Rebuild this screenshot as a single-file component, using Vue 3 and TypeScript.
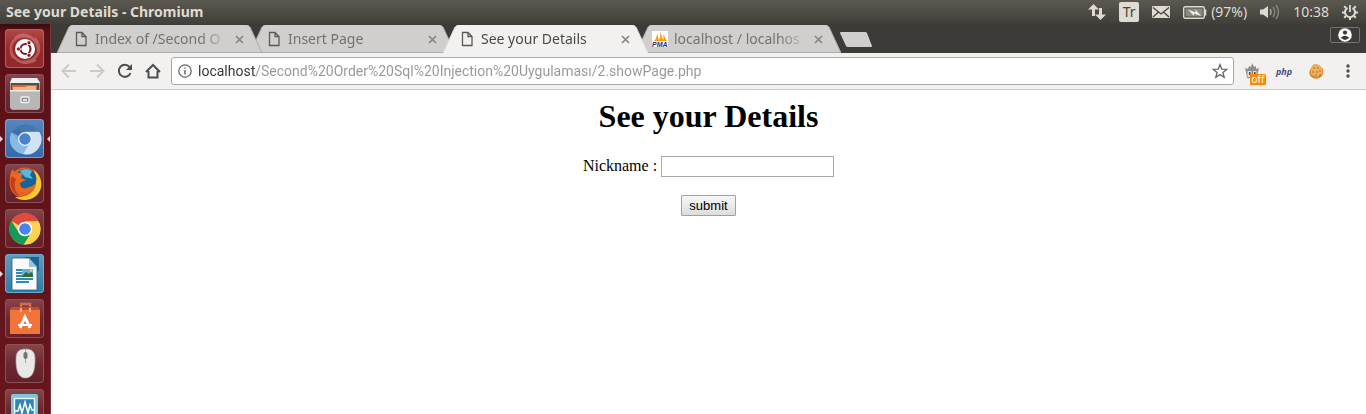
<script setup lang="ts">
import { ref } from 'vue'

interface Tab {
  title: string
  icon: 'page' | 'pma'
  active: boolean
}

interface LauncherItem {
  id: string
  label: string
  running?: boolean
  focused?: boolean
}

const tabs: Tab[] = [
  { title: 'Index of /Second O', icon: 'page', active: false },
  { title: 'Insert Page', icon: 'page', active: false },
  { title: 'See your Details', icon: 'page', active: true },
  { title: 'localhost / localhos', icon: 'pma', active: false },
]

const launcher: LauncherItem[] = [
  { id: 'dash', label: 'Search your computer' },
  { id: 'files', label: 'Files' },
  { id: 'chromium', label: 'Chromium', running: true, focused: true },
  { id: 'firefox', label: 'Firefox' },
  { id: 'chrome', label: 'Chrome' },
  { id: 'writer', label: 'Writer', running: true },
  { id: 'software', label: 'Software' },
  { id: 'mouse', label: 'Mouse' },
  { id: 'monitor', label: 'System Monitor' },
]

const address = ref('localhost/Second%20Order%20Sql%20Injection%20Uygulaması/2.showPage.php')
const nickname = ref('')
</script>

<template>
  <div class="desktop">
    <header class="panel">
      <span class="panel-title">See your Details - Chromium</span>
      <div class="indicators">
        <svg width="18" height="18" viewBox="0 0 18 18" fill="#dfdbd2">
          <path d="M5.500 1 0 6.500h4V13h3V6.500h4z" />
          <path d="M12.500 17l5.500-5.500h-4V5h-3v6.500H7z" />
        </svg>
        <span class="layout-badge">Tr</span>
        <svg width="18" height="12" viewBox="0 0 18 12">
          <rect width="18" height="12" rx="1" fill="#dfdbd2" />
          <path d="M1 1.500 9 8l8-6.500M1 11l5.500-5M17 11l-5.500-5" fill="none" stroke="#45443e" stroke-width="1.300" />
        </svg>
        <span class="battery">
          <svg width="24" height="13" viewBox="0 0 24 13">
            <rect x=".7" y=".7" width="20.600" height="11.600" rx="1.500" fill="none" stroke="#dfdbd2" stroke-width="1.400" />
            <rect x="2.500" y="2.500" width="17" height="8" fill="#8b8982" />
            <path d="M22.500 3.500v6" stroke="#dfdbd2" stroke-width="1.600" />
            <path d="M5 3.500l7.500 3V3.500l5.500 6.500-7-2.500v2.500z" fill="#f1eee8" />
          </svg>
          <span class="panel-text">(97%)</span>
        </span>
        <svg width="20" height="16" viewBox="0 0 20 16" fill="none">
          <path d="M0 5.500h3l5-3.500v12l-5-3.500H0z" fill="#dfdbd2" />
          <path d="M10 5q2 3 0 6" stroke="#a5a39b" stroke-width="1.500" />
          <path d="M13 3q3.500 5 0 10M16 1q5 7 0 14" stroke="#85837b" stroke-width="1.500" />
        </svg>
        <time class="panel-text">10:38</time>
        <svg width="16" height="16" viewBox="0 0 16 16" fill="none" stroke="#dfdbd2">
          <path d="M5.500 3.800a5 5 0 1 0 5 0" stroke-width="2" />
          <path d="M8 1v7" stroke-width="1.800" />
          <path d="M4 4 2.200 2.200M12 4l1.800-1.800M3 8.500H0M13 8.500h3M4 12l-1.800 1.800M12 12l1.800 1.800M8 13v3" stroke-width="2" />
        </svg>
      </div>
    </header>

    <div class="workspace">
      <nav class="launcher">
        <button
          v-for="item in launcher"
          :key="item.id"
          type="button"
          :aria-label="item.label"
          :class="['tile', item.id, { running: item.running, focused: item.focused }]"
        >
          <svg v-if="item.id === 'dash'" viewBox="0 0 39 39">
            <path d="M8 29C1 15 11 4 25 8M30 9c10 13 0 25-14 24M10 9C20 1 34 10 33 23M31 31C19 38 5 31 6 17" fill="none" stroke="#e5a8a0" stroke-opacity=".4" stroke-width="2.500" />
            <circle cx="20" cy="20" r="10" fill="#fff" />
            <circle cx="20.500" cy="20" r="5" fill="none" stroke="#7a1a1c" stroke-width="2.200" />
            <path d="M12.500 20h6M24 12.500l-3 6M24 27.500l-3-6" stroke="#fff" stroke-width="1.200" />
            <g fill="#7a1a1c" stroke="#fff" stroke-width=".7">
              <circle cx="13.500" cy="20" r="2" />
              <circle cx="24" cy="13.800" r="2" />
              <circle cx="24" cy="26.200" r="2" />
            </g>
          </svg>
          <svg v-else-if="item.id === 'files'" viewBox="0 0 39 39">
            <path d="M5 8 7 4h25l3 4v26l-2 2H7l-2-2z" fill="#a3a19f" />
            <path d="M5 9 7 4h25l3 5z" fill="#efefee" />
            <path d="M6 9h28v8H6z" fill="#54504e" />
            <path d="M7 11h25v6H7z" fill="#d9692f" />
            <path d="M8 13h12l2-1h9v5H8z" fill="#f3b27d" />
            <path d="M5 16h30v17l-2 2H7l-2-2z" fill="#b9b7b5" />
            <path d="M5 16h30v1.500H5z" fill="#ececeb" />
            <rect x="16" y="23" width="8" height="5.500" rx="1" fill="#8c8a88" stroke="#f2f2f2" stroke-width="1.300" />
            <path d="M18 26h4" stroke="#fff" stroke-width="1.500" />
          </svg>
          <svg v-else-if="item.id === 'chromium'" viewBox="0 0 39 39">
            <circle cx="20" cy="20" r="15" fill="#79a9dc" />
            <path d="M20 20 6.500 13.500A15 15 0 0 1 33 12.500H20z" fill="#4577ad" />
            <path d="M6.500 13.500A15 15 0 0 0 18 35l6-9-10-3z" fill="#8bb9e6" />
            <path d="M20 13h14.500A15 15 0 0 1 18 35l7-11z" fill="#cfe3f5" />
            <path d="M6.500 12.500 20 20l-6-10z" fill="#2f639c" opacity=".4" />
            <circle cx="20" cy="20" r="7" fill="#e4f0fa" />
            <circle cx="20" cy="20" r="5.700" fill="#4a84c6" />
          </svg>
          <svg v-else-if="item.id === 'firefox'" viewBox="0 0 39 39">
            <circle cx="20" cy="19" r="15.500" fill="#e66020" />
            <path d="M29 6c10 8 9 20 2 26-6 5-16 5-21 1 10 1 20-3 21-14 0-5-1-9-2-13z" fill="#fbca32" />
            <circle cx="21" cy="15" r="10.500" fill="#176399" />
            <path d="M15 7q6-4 12 0l-2 4 3 4-8-2z" fill="#58b9dd" />
            <path d="M5 14C5 10 6 7 8 5l2 5q4-2 8-1l-2 5 5 2-6 3c0 5 4 7 9 4 4 0 4-3 7-3-2 7-8 11-15 8C9 27 5 21 5 14z" fill="#ea6a22" />
            <path d="M7 12c-4 8 0 17 8 21C10 28 8 22 11 15l-3-2z" fill="#c73a1e" />
          </svg>
          <svg v-else-if="item.id === 'chrome'" viewBox="0 0 39 39">
            <circle cx="20" cy="20" r="15.500" fill="#ffd34e" />
            <path d="M20 20 6.500 12A15.500 15.500 0 0 1 33.500 12.500H20z" fill="#df4c3e" />
            <path d="M6.500 12A15.500 15.500 0 0 0 19 35.500L26.500 23l-13 0z" fill="#159b58" />
            <path d="M20 12.500h13.500A15.500 15.500 0 0 1 19 35.500L26.500 24z" fill="#ffd34e" />
            <circle cx="20" cy="20" r="7.300" fill="#fff" />
            <circle cx="20" cy="20" r="5.800" fill="#4b83ed" />
          </svg>
          <svg v-else-if="item.id === 'writer'" viewBox="0 0 39 39">
            <path d="M20 3h14v15z" fill="#1b6593" />
            <path d="M7 4h17l8 9v23H7z" fill="#fbfbfb" stroke="#235d7e" stroke-width=".8" />
            <path d="M24 4v9h8z" fill="#91c4df" />
            <path d="M11 16h6M11 19h6M11 22h6M11 25h17M11 28h13" stroke="#3289b9" stroke-width="2" />
            <rect x="17" y="15" width="11" height="8" fill="#65b0dd" />
            <path d="M17 22l4-4 3 2 2-2 2 2v3H17z" fill="#326d2e" />
            <circle cx="26" cy="16.500" r="1.200" fill="#f1d66b" />
          </svg>
          <svg v-else-if="item.id === 'software'" viewBox="0 0 39 39">
            <path d="M16 10V5h9v5" fill="none" stroke="#d7684a" stroke-width="2.500" />
            <path d="M7 8h26l2 3v24H5V11z" fill="#f1743b" />
            <path d="M7 8h26l2 3H5z" fill="#c84b2a" />
            <path d="M15 9h2v4h-2zM24 9h2v4h-2z" fill="#edaa8e" />
            <path d="M15 29 20 18l5 11" fill="none" stroke="#fff" stroke-width="3" />
            <path d="M13 26h14" stroke="#fff" stroke-width="2" />
          </svg>
          <svg v-else-if="item.id === 'mouse'" viewBox="0 0 39 39">
            <path d="M20.500 5c8 0 9.500 4 9.500 11 0 10-2 18-9.500 18S11 26 11 16c0-7 1.500-11 9.500-11z" fill="#e8e8e7" stroke="#b4adab" stroke-width=".7" />
            <path d="M20.500 5v14" stroke="#aaa" stroke-width="1" />
            <rect x="18.500" y="8" width="4" height="7" rx="2" fill="#747474" />
          </svg>
          <svg v-else viewBox="0 0 39 39">
            <rect x="6" y="5" width="27" height="32" rx="2" fill="#7cc5e0" />
            <rect x="9.500" y="9.500" width="20" height="24" fill="#2f86b4" stroke="#eaf8ff" stroke-width="1.400" />
            <path d="M10 22h3l2-6 2 8 3-11 3 11 2-8 2 5h3" fill="none" stroke="#fff" stroke-width="1.500" />
          </svg>
        </button>
      </nav>

      <main class="window">
        <div class="tab-strip">
          <button
            v-for="tab in tabs"
            :key="tab.title"
            type="button"
            :class="['tab', { active: tab.active }]"
          >
            <svg class="tab-shape" viewBox="0 0 205 28" preserveAspectRatio="none">
              <path class="tab-fill" d="M0 28 12 2Q13 0 15 0H190Q192 0 193 2L205 28z" />
              <path class="tab-edge" d="M0 28 12 2M193 2 205 28" />
              <path v-if="!tab.active" class="tab-edge" d="M0 27.500H205" />
            </svg>
            <svg v-if="tab.icon === 'page'" class="tab-icon" viewBox="0 0 16 16" fill="none" stroke="#5a5a5a" stroke-width="1.300">
              <path d="M3.500 1.500h5.500l4 4v9H3.500zM9 1.500v4h4" />
            </svg>
            <svg v-else class="tab-icon" viewBox="0 0 16 16">
              <rect width="16" height="16" fill="#fff" />
              <path d="M2 10Q5 7 5 2l2 8zM6.500 10Q9 6 8 0l3.500 10zM11 10q1-3 0-7l4 7z" fill="#f89c0e" />
              <text x="0" y="16" class="pma">PMA</text>
            </svg>
            <span class="tab-title">{{ tab.title }}</span>
            <svg class="tab-close" viewBox="0 0 9 9" stroke="#858585" stroke-width="1.700">
              <path d="M1 1l7 7M8 1 1 8" />
            </svg>
          </button>
          <button type="button" class="new-tab" aria-label="New tab">
            <svg width="32" height="15" viewBox="0 0 32 15">
              <path d="M1 0h24q1.500 0 2 1l5 13q0 1-1 1H8q-1.500 0-2-1L0 1q0-1 1-1z" fill="#d0cfcd" />
            </svg>
          </button>
          <button type="button" class="profile" aria-label="Profile">
            <svg width="14" height="14" viewBox="0 0 14 14">
              <circle cx="7" cy="7" r="6.800" fill="#fff" />
              <circle cx="7" cy="4.600" r="2.100" fill="#3c3b37" />
              <path d="M2.800 9.800Q7 5.800 11.200 9.800 7 14 2.800 9.800z" fill="#3c3b37" />
            </svg>
          </button>
        </div>

        <div class="toolbar">
          <button type="button" class="nav-button" aria-label="Back">
            <svg viewBox="0 0 16 16" stroke="#cbcac8"><path d="M15 8H2M8 1.500 1.500 8 8 14.500" /></svg>
          </button>
          <button type="button" class="nav-button" aria-label="Forward">
            <svg viewBox="0 0 16 16" stroke="#cbcac8"><path d="M1 8h13M8 1.500 14.500 8 8 14.500" /></svg>
          </button>
          <button type="button" class="nav-button" aria-label="Reload">
            <svg viewBox="0 0 16 16" stroke="#4d4d4d">
              <path d="M13.500 10A6 6 0 1 1 12.500 4" />
              <path d="M15 1v6H9z" fill="#4d4d4d" stroke="none" />
            </svg>
          </button>
          <button type="button" class="nav-button" aria-label="Home">
            <svg viewBox="0 0 16 16" stroke="#4d4d4d"><path d="M1 9 8 2l7 7M3.500 8v6.500h9V8" /></svg>
          </button>
          <div class="omnibox">
            <svg width="14" height="14" viewBox="0 0 14 14" fill="none" stroke="#666" stroke-width="1.300">
              <circle cx="7" cy="7" r="6.200" />
              <path d="M7 6v4.500M7 3.500v1.300" stroke-width="1.500" />
            </svg>
            <input v-model="address" class="address" type="text" aria-label="Address" spellcheck="false" />
            <svg width="16" height="16" viewBox="0 0 16 16" fill="none" stroke="#666" stroke-width="1.300">
              <path d="M8 1.500l1.800 4.600 4.900.3-3.800 3.100 1.300 4.800L8 11.600l-4.200 2.700 1.300-4.800-3.800-3.100 4.900-.3z" />
            </svg>
          </div>
          <button type="button" class="extension" aria-label="Proxy">
            <svg width="16" height="16" viewBox="0 0 16 16">
              <path d="M3 15 2 9 1 5l3 1 1-3 2 1 1-4 2 4 2-1v3l3-1-1 4-1 6z" fill="#8d8d8d" />
              <path d="M3.500 8h4v6h-4zM9 8h3.500v6H9z" fill="#dedede" />
              <path d="M5 9h1.500v3H5zM10 9h1.500v3H10z" fill="#444" />
            </svg>
            <span class="off">off</span>
          </button>
          <button type="button" class="extension php">php</button>
          <button type="button" class="extension" aria-label="Cookies">
            <svg width="15" height="15" viewBox="0 0 15 15">
              <path d="M4 1q4-2 7 1l3 3q1 5-2 8-4 3-8 1-5-3-3-8z" fill="#d9842b" />
              <path d="M4 1q4-2 7 1l2.500 4q0 5-3.500 6-4 2-8-2Q1 4 4 1z" fill="#f0b05c" />
              <g fill="#a4602c"><circle cx="5" cy="4" r=".8" /><circle cx="9" cy="4" r=".8" /><circle cx="4" cy="8" r=".8" /><circle cx="8" cy="8" r=".8" /><circle cx="11" cy="7" r=".8" /><circle cx="7" cy="11" r=".8" /><circle cx="11" cy="11" r=".8" /></g>
            </svg>
          </button>
          <button type="button" class="extension" aria-label="Menu">
            <svg width="4" height="14" viewBox="0 0 4 14" fill="#4d4d4d">
              <circle cx="2" cy="2" r="1.700" /><circle cx="2" cy="7" r="1.700" /><circle cx="2" cy="12" r="1.700" />
            </svg>
          </button>
        </div>

        <section class="page">
          <h1>See your Details</h1>
          <form @submit.prevent>
            <div class="field">
              <label for="nickname">Nickname :</label>
              <input id="nickname" v-model="nickname" type="text" />
            </div>
            <button type="submit" class="submit">submit</button>
          </form>
        </section>
      </main>
    </div>
  </div>
</template>

<style>
body {
  margin: 0;
  overflow: hidden;
}
</style>

<style scoped>
.desktop {
  display: flex;
  flex-direction: column;
  height: 100vh;
  overflow: hidden;
  font-family: "Noto Sans", "Open Sans", sans-serif;
  font-size: 14px;
}
button {
  font: inherit;
  padding: 0;
  border: 0;
  background: none;
}
svg {
  flex: none;
}
.panel {
  flex: none;
  display: flex;
  align-items: center;
  justify-content: space-between;
  height: 24px;
  padding: 0 8px 0 6px;
  background: linear-gradient(#5b594f, #3f3e39);
  color: #dfdbd2;
}
.panel-title,
.panel-text {
  padding-bottom: 2px;
}
.panel-title {
  font-weight: 700;
}
.indicators {
  display: flex;
  align-items: center;
  gap: 13px;
}
.layout-badge {
  width: 20px;
  height: 20px;
  border-radius: 2px;
  background: #dfdbd2;
  color: #45443e;
  font-size: 14px;
  line-height: 20px;
  text-align: center;
}
.battery {
  display: flex;
  align-items: center;
  gap: 4px;
}
.workspace {
  flex: 1;
  display: flex;
  min-height: 0;
}
.launcher {
  flex: none;
  display: flex;
  flex-direction: column;
  gap: 6px;
  box-sizing: border-box;
  width: 51px;
  padding: 5px 0 0 5px;
  border-right: 1px solid #77333a;
  background: linear-gradient(#3c0a0e, #5a1117 8px, #68161d);
  overflow: hidden;
}
.tile {
  position: relative;
  flex: none;
  width: 39px;
  height: 39px;
  border-radius: 4px;
  background: linear-gradient(#86464b, #6b2930 50%, #64212a);
  box-shadow: inset 0 0 0 1px #8d5055;
}
.tile svg {
  display: block;
  width: 39px;
  height: 39px;
}
.dash {
  background: linear-gradient(#b04a48, #98272a 50%, #92292b);
  box-shadow: inset 0 0 0 1px #b9605d;
}
.chromium {
  background: linear-gradient(#5687c0, #346aa8);
  box-shadow: inset 0 0 0 1px #7ba3d1;
}
.writer {
  background: linear-gradient(#5f9dc0, #2f7ba6);
  box-shadow: inset 0 0 0 1px #6caacc;
}
.running::before,
.focused::after {
  content: "";
  position: absolute;
  top: 17px;
  border: 3px solid transparent;
}
.running::before {
  left: -5px;
  border-left-color: #ddd;
  border-right-width: 0;
}
.focused::after {
  right: -6px;
  border-right-color: #ddd;
  border-left-width: 0;
}
.window {
  flex: 1;
  display: flex;
  flex-direction: column;
  min-width: 0;
}
.tab-strip {
  display: flex;
  align-items: flex-end;
  height: 29px;
  padding: 0 6px;
  background: #3c3b37;
}
.tab {
  position: relative;
  z-index: 1;
  display: flex;
  align-items: center;
  box-sizing: border-box;
  width: 205px;
  height: 28px;
  margin-right: -12px;
  padding: 0 18px 0 16px;
  color: #727272;
  text-align: left;
}
.tab:first-child {
  z-index: 2;
}
.tab.active {
  z-index: 3;
  color: #4a4a4a;
}
.tab-shape {
  position: absolute;
  inset: 0;
  z-index: -1;
  width: 100%;
  height: 100%;
}
.tab-fill {
  fill: #d0cfcd;
}
.active .tab-fill {
  fill: #f2f1f0;
}
.tab-edge {
  fill: none;
  stroke: #aeadab;
}
.active .tab-edge {
  stroke: #dddcda;
}
.tab-icon {
  width: 16px;
  height: 16px;
  margin-right: 6px;
}
.pma {
  font: italic 700 7px "Liberation Sans", sans-serif;
  fill: #2c2c74;
}
.tab-title {
  flex: 1;
  padding-bottom: 2px;
  white-space: nowrap;
  mask-image: linear-gradient(to right, #000 105px, transparent 134px);
}
.tab-close {
  width: 9px;
  height: 9px;
  margin-left: 7px;
}
.new-tab {
  display: flex;
  margin: 0 0 6px 11px;
}
.profile {
  display: flex;
  align-items: center;
  justify-content: center;
  box-sizing: border-box;
  width: 30px;
  height: 16px;
  margin: 0 0 10px auto;
  border: 1px solid #74736f;
  border-radius: 2px;
}
.toolbar {
  display: flex;
  align-items: center;
  height: 36px;
  padding: 0 2px 0 4px;
  border-bottom: 1px solid #cccbca;
  background: #f2f1f0;
}
.nav-button {
  display: flex;
  justify-content: center;
  width: 28px;
}
.nav-button svg {
  width: 16px;
  height: 16px;
  fill: none;
  stroke-width: 2;
}
.omnibox {
  flex: 1;
  display: flex;
  align-items: center;
  box-sizing: border-box;
  height: 28px;
  min-width: 0;
  margin: 0 2px 0 4px;
  padding: 0 5px 0 6px;
  border: 1px solid #a9a8a6;
  border-radius: 3px;
  background: #fff;
}
.address {
  flex: 1;
  min-width: 0;
  margin: 0 6px;
  padding: 0;
  border: 0;
  outline: 0;
  font-family: Roboto, "Noto Sans", sans-serif;
  font-size: 14px;
  color: transparent;
  caret-color: #333;
  background: linear-gradient(to right, #333 58px, #969696 58px);
  background-clip: text;
}
.extension {
  position: relative;
  display: flex;
  align-items: center;
  justify-content: center;
  width: 32px;
  height: 28px;
}
.off {
  position: absolute;
  right: 2px;
  bottom: 0;
  width: 16px;
  height: 11px;
  border-radius: 1px;
  background: #ff8a00;
  color: #fff;
  font-size: 10px;
  line-height: 11px;
  text-align: center;
}
.php {
  color: #46507f;
  font-size: 9px;
  font-style: italic;
  font-weight: 700;
}
.page {
  flex: 1;
  padding: 8px;
  background: #fff;
  color: #000;
  font-family: "Liberation Serif", serif;
  font-size: 16px;
  text-align: center;
}
h1 {
  margin: 0 0 21px;
  font-size: 32px;
  line-height: 37px;
}
.field {
  display: flex;
  align-items: flex-start;
  justify-content: center;
  gap: 4px;
  margin-bottom: 18px;
}
.field label {
  line-height: 19px;
}
.field input {
  box-sizing: border-box;
  width: 173px;
  height: 21px;
  padding: 1px 2px;
  border: 1px solid #a9a9a9;
  background: #fff;
}
.submit {
  box-sizing: border-box;
  height: 21px;
  padding: 0 7px;
  border: 1px solid #a0a0a0;
  border-radius: 1px;
  background: linear-gradient(#f6f6f6, #dddddd);
  color: #000;
  font-family: "Liberation Sans", sans-serif;
  font-size: 13px;
}
</style>
